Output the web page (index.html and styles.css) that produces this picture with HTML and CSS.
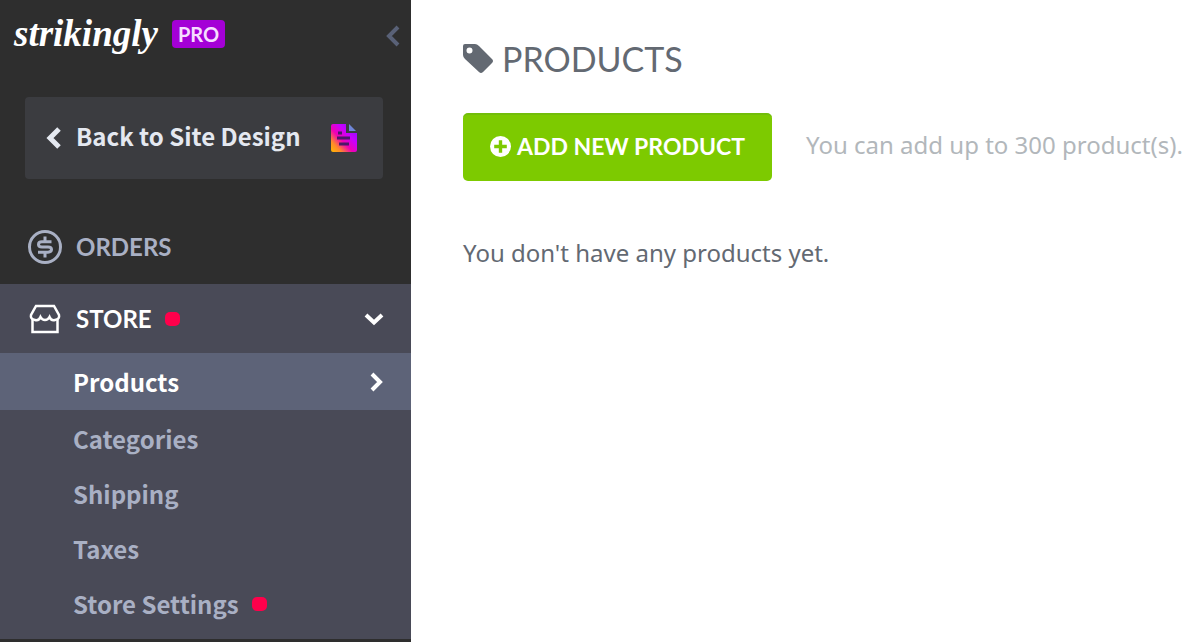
FILE: index.html
```html
<!DOCTYPE html>
<html lang="en">
<head>
    <meta charset="UTF-8">
    <meta name="viewport" content="width=device-width, initial-scale=1.0">
    <title>Products - Strikingly</title>
    <link rel="stylesheet" href="styles.css">
</head>

<body>
    <!-- Sidebar -->
    <aside class="sidebar">
        <header class="brand">
            <a class="logo" href="#">strikingly</a>
            <span class="badge">PRO</span>
            <button class="collapse" type="button" aria-label="Collapse menu">
                <svg width="14" height="22" viewBox="0 0 14 22"><path d="M12 2 L3 11 L12 20" fill="none" stroke="currentColor" stroke-width="4"/></svg>
            </button>
        </header>

        <a class="back" href="#">
            <svg width="16" height="22" viewBox="0 0 16 22"><path d="M13 2 L4 11 L13 20" fill="none" stroke="currentColor" stroke-width="5"/></svg>
            <span>Back to Site Design</span>
            <svg class="page-icon" width="26" height="28" viewBox="0 0 26 28">
                <defs>
                    <linearGradient id="page-fill" x1="0" y1="1" x2="1" y2="0">
                        <stop offset="0" stop-color="#ffb800"/>
                        <stop offset="0.2" stop-color="#ff8a2a"/>
                        <stop offset="0.42" stop-color="#f000b4"/>
                        <stop offset="0.65" stop-color="#c800ff"/>
                        <stop offset="1" stop-color="#7a10ff"/>
                    </linearGradient>
                </defs>
                <path d="M2 0 H15 V9 H26 V26 Q26 28 24 28 H2 Q0 28 0 26 V2 Q0 0 2 0 Z" fill="url(#page-fill)"/>
                <path d="M18 0 L25 7 H18 Z" fill="#6f86d8"/>
                <path d="M7 9 H11 M6 14 H19 M8 20 H18" stroke="#4b1769" stroke-width="3"/>
            </svg>
        </a>

        <nav>
            <a class="section" href="#">
                <svg width="36" height="36" viewBox="0 0 36 36" fill="none" stroke="currentColor">
                    <circle cx="18" cy="18" r="15.5" stroke-width="3"/>
                    <path d="M24.5 12.8 H15 Q11.5 12.8 11.5 15.4 Q11.5 18 15 18 H21 Q24.5 18 24.5 20.6 Q24.5 23.2 21 23.2 H11 M18 7.5 V12.8 M18 23.2 V28.5" stroke-width="3"/>
                </svg>
                <span>ORDERS</span>
            </a>

            <div class="store">
                <button class="section" type="button" aria-expanded="true">
                    <svg width="36" height="36" viewBox="0 0 36 36" fill="none" stroke="currentColor" stroke-width="2.5">
                        <path d="M9 5 H27 L32 14 Q33 18 28 19 Q24 20 22.5 16 Q21 19 18 19 Q15 19 13.5 16 Q12 20 8 19 Q3 18 4 14 Z"/>
                        <path d="M5.5 18 V31 H30.5 V18"/>
                    </svg>
                    <span>STORE</span>
                    <i class="dot"></i>
                    <svg class="arrow" width="20" height="14" viewBox="0 0 20 14"><path d="M2 3 L10 10.5 L18 3" fill="none" stroke="currentColor" stroke-width="4"/></svg>
                </button>
                <ul class="submenu">
                    <li><a class="active" href="#">Products
                        <svg class="arrow" width="14" height="20" viewBox="0 0 14 20"><path d="M2 2 L10 10 L2 18" fill="none" stroke="currentColor" stroke-width="4"/></svg>
                    </a></li>
                    <li><a href="#">Categories</a></li>
                    <li><a href="#">Shipping</a></li>
                    <li><a href="#">Taxes</a></li>
                    <li><a href="#">Store Settings <i class="dot"></i></a></li>
                </ul>
            </div>
        </nav>
    </aside>

    <!-- Content -->
    <main>
        <h1>
            <svg width="30" height="30" viewBox="0 0 30 30"><path fill="currentColor" fill-rule="evenodd" d="M2 0 H12 Q14 0 16 2 L29 15 Q31 17 29 19 L20 28 Q18 30 16 28 L2 15 Q0 13 0 11 V2 Q0 0 2 0 Z M6.5 3.5 A3 3 0 1 0 6.5 9.5 A3 3 0 1 0 6.5 3.5 Z"/></svg>
            PRODUCTS
        </h1>

        <div class="actions">
            <button class="add" type="button">
                <svg width="21" height="21" viewBox="0 0 20 20"><circle cx="10" cy="10" r="10" fill="currentColor"/><path d="M10 4 V16 M4 10 H16" stroke="#7dca00" stroke-width="3.2"/></svg>
                ADD NEW PRODUCT
            </button>
            <span class="hint">You can add up to 300 product(s).</span>
        </div>

        <p>You don't have any products yet.</p>
    </main>
</body>
</html>
```
FILE: styles.css
```css
* {
    margin: 0;
    padding: 0;
    box-sizing: border-box;
}

body {
    display: flex;
    min-height: 100vh;
    background-color: #fff;
    color: #636972;
    font-family: "Noto Sans", "Open Sans", sans-serif;
    font-size: 24px;
}

a {
    color: inherit;
    text-decoration: none;
}

button {
    border: none;
    background: none;
    color: inherit;
    cursor: pointer;
}

svg {
    flex-shrink: 0;
}

/* Sidebar */
.sidebar {
    flex-shrink: 0;
    width: 411px;
    background-color: #2e2e2e;
    color: #a9b0c4;
    font-family: "Noto Sans CJK SC", sans-serif;
    font-weight: 700;
}

.brand {
    display: flex;
    align-items: center;
    height: 72px;
    padding: 0 11px 4px 14px;
}

.logo {
    color: #fff;
    font-family: "Liberation Serif", serif;
    font-size: 37px;
    font-style: italic;
    line-height: 40px;
}

.badge {
    margin-left: 14px;
    padding: 0 6px;
    border-radius: 4px;
    background-color: #a400d6;
    color: #f6dcff;
    font-family: Lato, sans-serif;
    font-size: 20px;
    line-height: 28px;
}

.collapse {
    display: flex;
    margin-left: auto;
    padding-top: 4px;
    color: #596177;
}

.back {
    display: flex;
    align-items: center;
    gap: 14px;
    height: 82px;
    margin: 25px 28px 0 25px;
    padding: 0 26px 0 21px;
    border-radius: 4px;
    background-color: #3b3c40;
    color: #e4e8f0;
}

.back span {
    padding-bottom: 5px;
}

.page-icon {
    margin-left: auto;
}

nav {
    padding-top: 33px;
}

.section {
    display: flex;
    align-items: center;
    gap: 13px;
    width: 100%;
    height: 69px;
    padding: 0 27px;
    font-family: Lato, sans-serif;
    font-size: 24px;
    font-weight: 700;
}

.store {
    margin-top: 3px;
    padding-bottom: 8px;
    background-color: #494a57;
}

.store .section {
    color: #fff;
}

.dot {
    width: 15px;
    height: 14px;
    border-radius: 5px;
    background-color: #ff004b;
}

.arrow {
    margin-left: auto;
}

.submenu {
    list-style: none;
}

.submenu a {
    display: flex;
    align-items: center;
    gap: 13px;
    height: 55px;
    padding: 0 27px 0 73px;
}

.submenu .active {
    height: 57px;
    margin-bottom: 1px;
    background-color: #5d6378;
    color: #fff;
}

/* Content */
main {
    flex: 1;
    padding: 37px 14px 38px 52px;
}

h1 {
    display: flex;
    align-items: center;
    gap: 9px;
    font-family: Lato, sans-serif;
    font-size: 34px;
    font-weight: 400;
    line-height: 44px;
}

.actions {
    display: flex;
    align-items: center;
    gap: 34px;
    margin-top: 32px;
}

.add {
    display: flex;
    align-items: center;
    justify-content: center;
    gap: 6px;
    height: 68px;
    padding: 0 27px 4px;
    border-top: 2px solid #72bd0a;
    border-radius: 5px;
    background-color: #7dca00;
    color: #fff;
    font-family: Lato, sans-serif;
    font-size: 23px;
    font-weight: 700;
    white-space: nowrap;
}

.hint {
    padding-bottom: 6px;
    color: #b2b7bb;
    white-space: nowrap;
}

main p {
    margin-top: 54px;
    line-height: 36px;
}
```
